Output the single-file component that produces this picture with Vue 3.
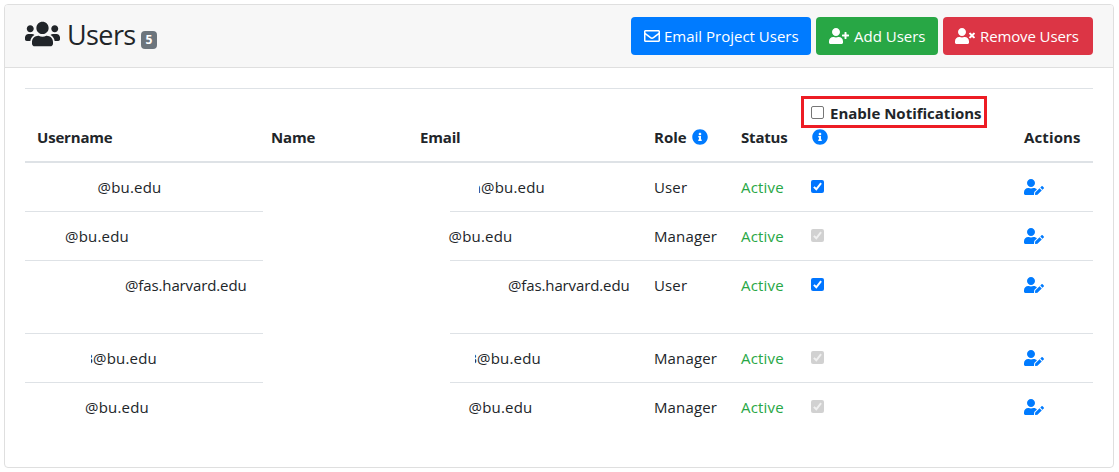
<script setup>
const person = 'M224 256c70.7 0 128-57.3 128-128S294.7 0 224 0 96 57.3 96 128s57.3 128 128 128zm89.6 32h-16.7c-22.2 10.2-46.9 16-72.9 16s-50.6-5.8-72.9-16h-16.7C60.2 288 0 348.2 0 422.4V464c0 26.5 21.5 48 48 48h352c26.5 0 48-21.5 48-48v-41.6c0-74.2-60.2-134.4-134.4-134.4z'
const info = 'M256 8C119.043 8 8 119.083 8 256c0 136.997 111.043 248 248 248s248-111.003 248-248C504 119.083 392.957 8 256 8zm0 110c23.196 0 42 18.804 42 42s-18.804 42-42 42-42-18.804-42-42 18.804-42 42-42zm56 254c0 6.627-5.373 12-12 12h-88c-6.627 0-12-5.373-12-12v-24c0-6.627 5.373-12 12-12h12v-64h-12c-6.627 0-12-5.373-12-12v-24c0-6.627 5.373-12 12-12h64c6.627 0 12 5.373 12 12v100h12c6.627 0 12 5.373 12 12v24z'
const edit = 'M224 256c70.7 0 128-57.3 128-128S294.7 0 224 0 96 57.3 96 128s57.3 128 128 128zm89.6 32h-16.7c-22.2 10.2-46.9 16-72.9 16s-50.6-5.8-72.9-16h-16.7C60.2 288 0 348.2 0 422.4V464c0 26.5 21.5 48 48 48h274.9c-2.4-6.8-3.4-14-2.6-21.3l6.8-60.9 1.2-11.1 7.9-7.9 77.3-77.3c-24.5-27.7-60-45.5-99.9-45.5zm45.3 145.3l-6.8 61c-1.1 10.2 7.5 18.8 17.6 17.6l60.9-6.8 137.9-137.9-71.7-71.7-137.9 137.8zM633 268.9L595.1 231c-9.3-9.3-24.5-9.3-33.8 0l-37.8 37.8-4.1 4.1 71.8 71.7 41.8-41.8c9.3-9.4 9.3-24.5 0-33.9z'

// nameGap / mailGap: width of the hidden local part before the domain
const rows = [
  { domain: '@bu.edu', nameGap: 60.5, mailGap: 61, mailTail: 'n', role: 'User', locked: false },
  { domain: '@bu.edu', nameGap: 28, mailGap: 28.5, role: 'Manager', locked: true },
  { domain: '@fas.harvard.edu', nameGap: 88, mailGap: 88, role: 'User', locked: false, tall: true },
  { domain: '@bu.edu', nameGap: 56, nameTail: '3', mailGap: 57, mailTail: '3', role: 'Manager', locked: true },
  { domain: '@bu.edu', nameGap: 48, mailGap: 48.5, role: 'Manager', locked: true },
]
</script>

<template>
  <section class="card">
    <header class="card-header">
      <h1>
        <svg class="i-users" viewBox="0 0 640 512"><path d="M96 224c35.3 0 64-28.7 64-64s-28.7-64-64-64-64 28.7-64 64 28.7 64 64 64zm448 0c35.3 0 64-28.7 64-64s-28.7-64-64-64-64 28.7-64 64 28.7 64 64 64zm32 32h-64c-17.6 0-33.5 7.1-45.1 18.6 40.3 22.1 68.9 62 75.1 109.4h66c17.7 0 32-14.3 32-32v-32c0-35.3-28.7-64-64-64zm-256 0c61.9 0 112-50.1 112-112S381.9 32 320 32 208 82.1 208 144s50.1 112 112 112zm76.8 32h-8.3c-20.8 10-43.9 16-68.5 16s-47.6-6-68.5-16h-8.3C179.6 288 128 339.6 128 403.2V432c0 26.5 21.5 48 48 48h288c26.5 0 48-21.5 48-48v-28.8c0-63.6-51.6-115.2-115.2-115.2zm-223.7-13.4C161.5 263.1 145.6 256 128 256H64c-35.3 0-64 28.7-64 64v32c0 17.7 14.3 32 32 32h65.9c6.3-47.4 34.9-87.3 75.2-109.4z" /></svg>
        <span class="title">Users</span>
        <span class="badge">5</span>
      </h1>
      <div class="buttons">
        <button class="btn primary">
          <svg class="i-mail" viewBox="0 0 512 512"><path d="M464 64H48C21.49 64 0 85.49 0 112v288c0 26.51 21.49 48 48 48h416c26.51 0 48-21.49 48-48V112c0-26.51-21.49-48-48-48zm0 48v40.805c-22.422 18.259-58.168 46.651-134.587 106.49-16.841 13.247-50.201 45.072-73.413 44.701-23.208.375-56.579-31.459-73.413-44.701C106.18 199.465 70.425 171.067 48 152.805V112h416zM48 400V214.398c22.914 18.251 55.409 43.862 104.938 82.646 21.857 17.205 60.134 55.186 103.062 54.955 42.717.231 80.509-37.199 103.053-54.947 49.528-38.783 82.032-64.401 104.947-82.653V400H48z" /></svg>
          <span>Email Project Users</span>
        </button>
        <button class="btn success">
          <svg class="i-person" viewBox="0 0 640 512"><path :d="person" /><path d="M624 208h-64v-64c0-8.8-7.2-16-16-16h-32c-8.8 0-16 7.2-16 16v64h-64c-8.8 0-16 7.2-16 16v32c0 8.8 7.2 16 16 16h64v64c0 8.8 7.2 16 16 16h32c8.8 0 16-7.2 16-16v-64h64c8.8 0 16-7.2 16-16v-32c0-8.8-7.2-16-16-16z" /></svg>
          <span>Add Users</span>
        </button>
        <button class="btn danger">
          <svg class="i-person" viewBox="0 0 640 512"><path :d="person" /><path d="M589.6 240l45.6-45.6c6.3-6.3 6.3-16.5 0-22.8l-22.8-22.8c-6.3-6.3-16.5-6.3-22.8 0L544 194.4l-45.6-45.6c-6.3-6.3-16.5-6.3-22.8 0l-22.8 22.8c-6.3 6.3-6.3 16.5 0 22.8l45.6 45.6-45.6 45.6c-6.3 6.3-6.3 16.5 0 22.8l22.8 22.8c6.3 6.3 16.5 6.3 22.8 0l45.6-45.6 45.6 45.6c6.3 6.3 16.5 6.3 22.8 0l22.8-22.8c6.3-6.3 6.3-16.5 0-22.8L589.6 240z" /></svg>
          <span class="remove">Remove Users</span>
        </button>
      </div>
    </header>

    <div class="card-body">
      <div class="row head">
        <div><span class="tight">Username</span></div>
        <div><span class="tight">Name</span></div>
        <div><span class="tight">Email</span></div>
        <div class="with-info"><span>Role</span><svg class="i-info" viewBox="0 0 512 512"><path :d="info" /></svg></div>
        <div><span class="tight">Status</span></div>
        <div class="notify">
          <label><span class="box"></span><span>Enable Notifications</span></label>
          <svg class="i-info" viewBox="0 0 512 512"><path :d="info" /></svg>
          <span class="highlight"></span>
        </div>
        <div><span class="loose">Actions</span></div>
      </div>

      <div v-for="(r, i) in rows" :key="i" class="row" :class="{ tall: r.tall, first: i === 0 }">
        <div class="masked">
          <span class="tail" :style="{ width: r.nameGap + 'px' }"><i v-if="r.nameTail">{{ r.nameTail }}</i></span>
          <span :class="r.tall ? 'domain-long' : 'domain'">{{ r.domain }}</span>
        </div>
        <div></div>
        <div class="masked">
          <span class="tail" :style="{ width: r.mailGap + 'px' }"><i v-if="r.mailTail">{{ r.mailTail }}</i></span>
          <span :class="r.tall ? 'domain-long' : 'domain'">{{ r.domain }}</span>
        </div>
        <div><span class="loose">{{ r.role }}</span></div>
        <div class="active"><span>Active</span></div>
        <div>
          <span class="box checked" :class="{ locked: r.locked }">
            <svg viewBox="0 0 13 13"><path d="M2.9 6.9 5.3 9.3 10.1 3.2" /></svg>
          </span>
        </div>
        <div><svg class="i-edit" viewBox="0 0 640 512"><path :d="edit" /></svg></div>
      </div>
    </div>
  </section>
</template>

<style>
body { background: #fff; }
</style>

<style scoped>
* { box-sizing: border-box; }
svg { display: block; flex: none; fill: currentColor; }
.card {
  width: 1110px;
  height: 464px;
  margin: 4px 0 0 4px;
  border: 1px solid #dfdfdf;
  border-radius: 4px;
  font-family: "Open Sans", "Noto Sans", sans-serif;
  font-size: 15px;
  line-height: 24px;
  color: #212529;
  white-space: nowrap;
  overflow: hidden;
}
.card-header {
  height: 63px;
  padding: 0 20px;
  display: flex;
  align-items: flex-start;
  justify-content: space-between;
  background: #f7f7f7;
  border-bottom: 1px solid #dfdfdf;
}
h1 {
  margin: 0;
  padding-top: 12px;
  display: flex;
  align-items: flex-start;
  font-size: 27px;
  line-height: 36px;
}
.i-users { width: 35px; height: 28px; margin-top: 3px; }
.title { margin-left: 7px; width: 69px; font-weight: 500; letter-spacing: -0.6px; }
.badge {
  margin: 14px 0 0 5px;
  width: 16px;
  height: 18px;
  border-radius: 4px;
  background: #6c757d;
  color: #fff;
  text-align: center;
  font: 700 12px/18px "Open Sans", sans-serif;
}
.buttons { display: flex; gap: 5px; padding-top: 12px; }
.btn {
  height: 38px;
  border: 0;
  border-radius: 4px;
  padding: 0 0 0 13px;
  display: flex;
  align-items: center;
  gap: 4px;
  color: #fff;
  font: 400 15px/24px "Open Sans", sans-serif;
}
.primary { width: 180px; background: #007bff; }
.success { width: 122px; background: #28a745; }
.success { gap: 5px; }
.danger { width: 150px; background: #dc3545; padding-left: 12px; }
.remove { margin-left: 1px; letter-spacing: -0.12px; }
.i-mail { width: 16px; height: 16px; }
.i-person { width: 20px; height: 16px; }
.card-body { margin: 20px 20px 0; border-top: 1px solid #dee2e6; }
.row {
  display: grid;
  grid-template-columns: 234px 149px 234px 87px 70px 213px 81px;
  height: 49px;
  padding-top: 13px;
  background: linear-gradient(to right, #dee2e6 238px, transparent 238px, transparent 425px, #dee2e6 425px) top / 100% 1px no-repeat;
}
.row > div { padding-left: 12px; }
.row.first { height: 48px; padding-top: 12px; background: none; }
.row.tall { height: 73px; }
.row.head {
  height: 74px;
  padding: 0 0 12px;
  align-items: end;
  background: none;
  border-bottom: 2px solid #dee2e6;
  font-weight: 700;
}
.tight { letter-spacing: -0.18px; }
.loose { letter-spacing: 0.13px; }
.with-info { display: flex; align-items: center; gap: 5px; }
.i-info { width: 16px; height: 16px; color: #007bff; }
.notify { position: relative; }
.notify label { display: flex; align-items: center; gap: 6px; }
.notify .box { margin: -2px 0 0; }
.notify > .i-info { margin: 4px 0 4px 1px; }
.highlight {
  position: absolute;
  left: 2px;
  top: -5px;
  width: 186px;
  height: 32px;
  border: 3px solid #ed1c24;
}
.masked { display: flex; }
.tail { flex: none; display: flex; justify-content: flex-end; height: 24px; }
.tail i { width: 2px; overflow: hidden; display: flex; justify-content: flex-end; font-style: normal; }
.domain { letter-spacing: 0.2px; }
.domain-long { letter-spacing: -0.12px; }
.active { color: #28a745; letter-spacing: 0.2px; }
.box {
  display: block;
  width: 13px;
  height: 13px;
  margin-top: 5px;
  border: 1px solid #767676;
  border-radius: 2px;
  background: #fff;
}
.box.checked { border: 0; background: #0075ff; }
.box.checked path { fill: none; stroke: #fff; stroke-width: 2; }
.box.locked { background: #d1d1d1; }
.box.locked path { stroke: #f0f0f0; }
.i-edit { width: 20px; height: 16px; margin-top: 4px; color: #007bff; }
</style>
